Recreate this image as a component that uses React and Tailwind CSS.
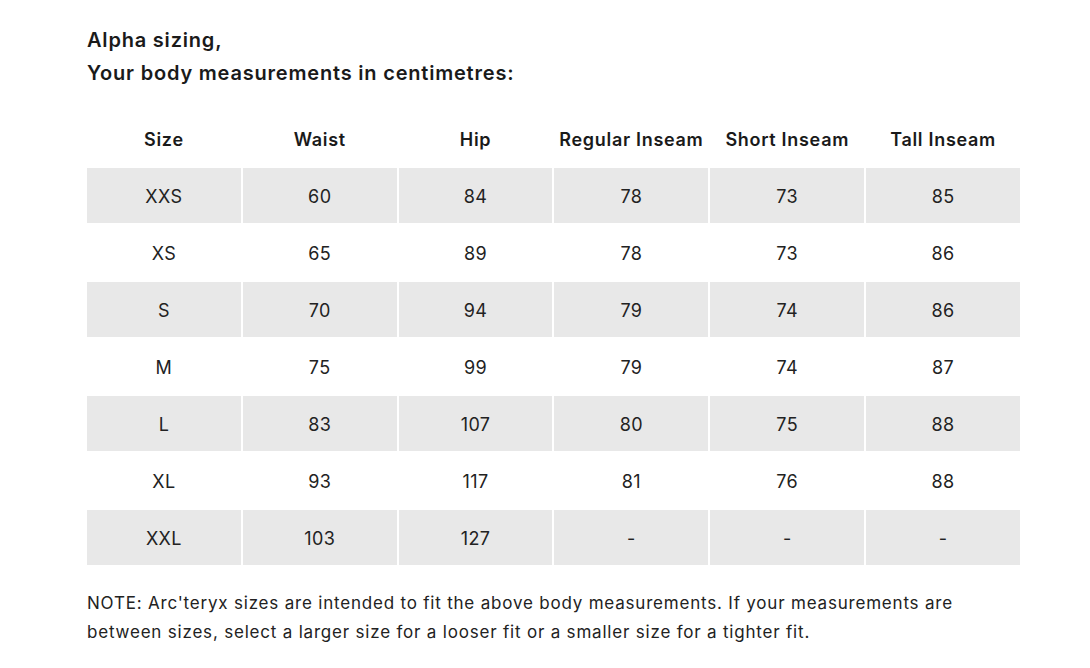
import React from "react";

const rows = [
  ["XXS", "60", "84", "78", "73", "85"],
  ["XS", "65", "89", "78", "73", "86"],
  ["S", "70", "94", "79", "74", "86"],
  ["M", "75", "99", "79", "74", "87"],
  ["L", "83", "107", "80", "75", "88"],
  ["XL", "93", "117", "81", "76", "88"],
  ["XXL", "103", "127", "-", "-", "-"],
];

const headers = ["Size", "Waist", "Hip", "Regular Inseam", "Short Inseam", "Tall Inseam"];

export default function App() {
  return (
    <div
      className="min-h-screen bg-white text-[#1a1a1a] pl-[85px] pt-[24px]"
      style={{ fontFamily: "Inter, 'Liberation Sans', sans-serif" }}
    >
      {/* Heading */}
      <div className="pl-[2px] text-[20px] font-semibold leading-[33px] tracking-[0.8px]">
        <p>Alpha sizing,</p>
        <p>Your body measurements in centimetres:</p>
      </div>

      {/* Size table */}
      <table className="mt-[22px] w-[937px] table-fixed border-separate border-spacing-[2px] text-[18px] tracking-[0.4px]">
        <thead>
          <tr>
            {headers.map((h) => (
              <th key={h} className="h-[52px] pb-[1px] align-middle text-center font-semibold tracking-[0.7px]">
                {h}
              </th>
            ))}
          </tr>
        </thead>
        <tbody>
          {rows.map((r, i) => (
            <tr key={r[0]}>
              {r.map((c, j) => (
                <td
                  key={j}
                  className={
                    "h-[55px] pt-[1px] text-center align-middle font-normal text-[#222] " +
                    (i % 2 === 0 ? "bg-[#e8e8e8]" : "")
                  }
                >
                  {c}
                </td>
              ))}
            </tr>
          ))}
        </tbody>
      </table>

      {/* Note */}
      <p className="mt-[22px] pl-[2px] w-[920px] text-[17px] leading-[29px] tracking-[0.8px] text-[#222]">
        NOTE: Arc'teryx sizes are intended to fit the above body measurements. If your measurements are
        between sizes, select a larger size for a looser fit or a smaller size for a tighter fit.
      </p>
    </div>
  );
}
